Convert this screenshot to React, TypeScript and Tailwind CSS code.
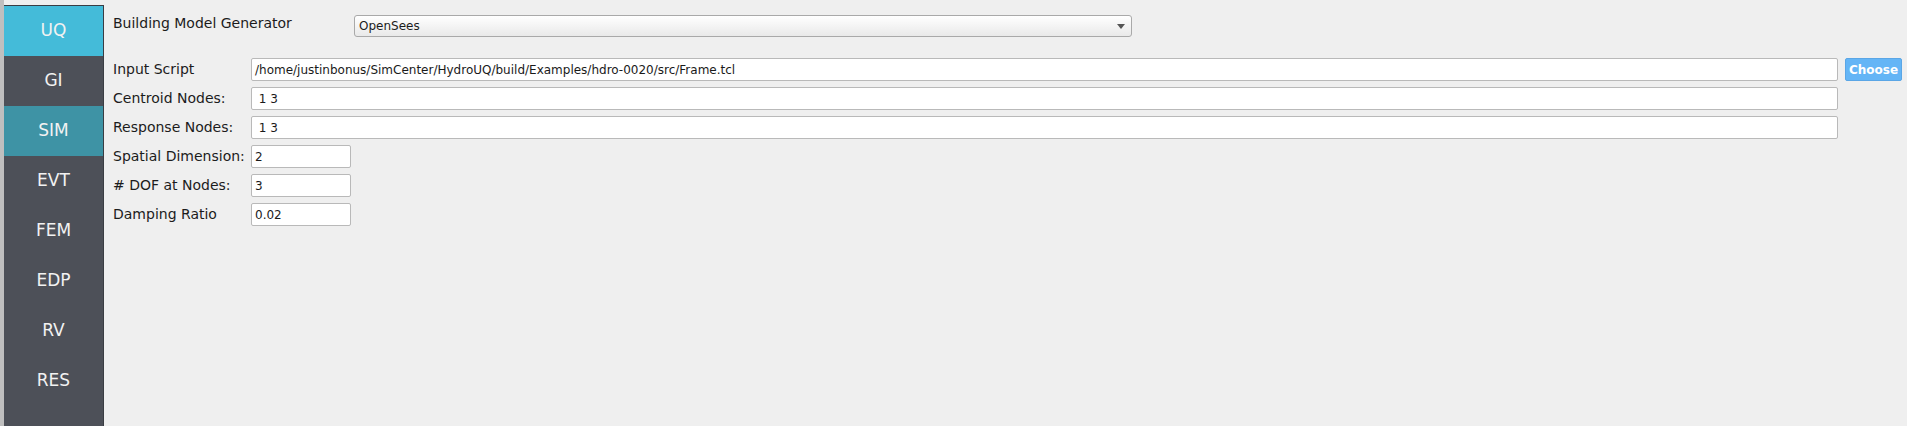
import React from 'react'

const navItems = ['UQ', 'GI', 'SIM', 'EVT', 'FEM', 'EDP', 'RV', 'RES']

const rows = [
  { label: 'Centroid Nodes:', value: ' 1 3', wide: true },
  { label: 'Response Nodes:', value: ' 1 3', wide: true },
  { label: 'Spatial Dimension:', value: '2', wide: false },
  { label: '# DOF at Nodes:', value: '3', wide: false },
  { label: 'Damping Ratio', value: '0.02', wide: false },
]

function navClass(name: string) {
  if (name === 'UQ') return 'bg-[#44bbd9]'
  if (name === 'SIM') return 'bg-[#3e93a5]'
  return 'bg-[#4d5058]'
}

function Field({ value, wide }: { value: string; wide: boolean }) {
  return (
    <div
      className={
        (wide ? 'flex-1 ' : 'w-[100px] ') +
        'h-[23px] bg-white border border-[#b9b9b9] rounded-[2px] flex items-center pl-[3px] text-[12px] text-[#1a1a1a] whitespace-pre'
      }
    >
      {value}
    </div>
  )
}

export default function App() {
  return (
    <div className="w-full h-[426px] bg-[#efefef] flex overflow-hidden" style={{ fontFamily: '"DejaVu Sans", Verdana, sans-serif' }}>
      <div className="w-[4px] bg-[#bfbfbf] shrink-0" />
      <div className="mt-[5px] w-[100px] shrink-0 bg-[#4d5058] border-t border-r border-[#3a3d43] flex flex-col">
        {navItems.map((n) => (
          <div key={n} className={navClass(n) + ' h-[50px] flex items-center justify-center text-[17px] text-[#f2f2f2]'}>
            {n}
          </div>
        ))}
      </div>

      <div className="flex-1 pl-[9px] pr-[5px] pt-[15px] text-[14px] text-[#1c1c1c]">
        <div className="flex items-start">
          <div className="w-[241px] leading-[16px]">Building Model Generator</div>
          <div className="w-[778px] h-[22px] border border-[#a9a9a9] rounded-[3px] bg-gradient-to-b from-white to-[#e9e9e9] flex items-center justify-between pl-[4px] pr-[6px] text-[12px]">
            <span>OpenSees</span>
            <svg width="8" height="5" viewBox="0 0 8 5">
              <path d="M0 0 L8 0 L4 5 Z" fill="#555" />
            </svg>
          </div>
        </div>

        <div className="mt-[21px] flex flex-col gap-[6px]">
          <div className="flex items-center">
            <div className="w-[138px] shrink-0">Input Script</div>
            <Field value="/home/justinbonus/SimCenter/HydroUQ/build/Examples/hdro-0020/src/Frame.tcl" wide={true} />
            <button className="ml-[7px] w-[57px] h-[23px] bg-[#64b5f6] border border-[#5aa6e6] rounded-[2px] text-white font-bold text-[12px] flex items-center justify-center">
              Choose
            </button>
          </div>
          {rows.map((r) => (
            <div key={r.label} className="flex items-center">
              <div className="w-[138px] shrink-0">{r.label}</div>
              <Field value={r.value} wide={r.wide} />
              {r.wide && <div className="ml-[7px] w-[57px] shrink-0" />}
            </div>
          ))}
        </div>
      </div>
    </div>
  )
}
